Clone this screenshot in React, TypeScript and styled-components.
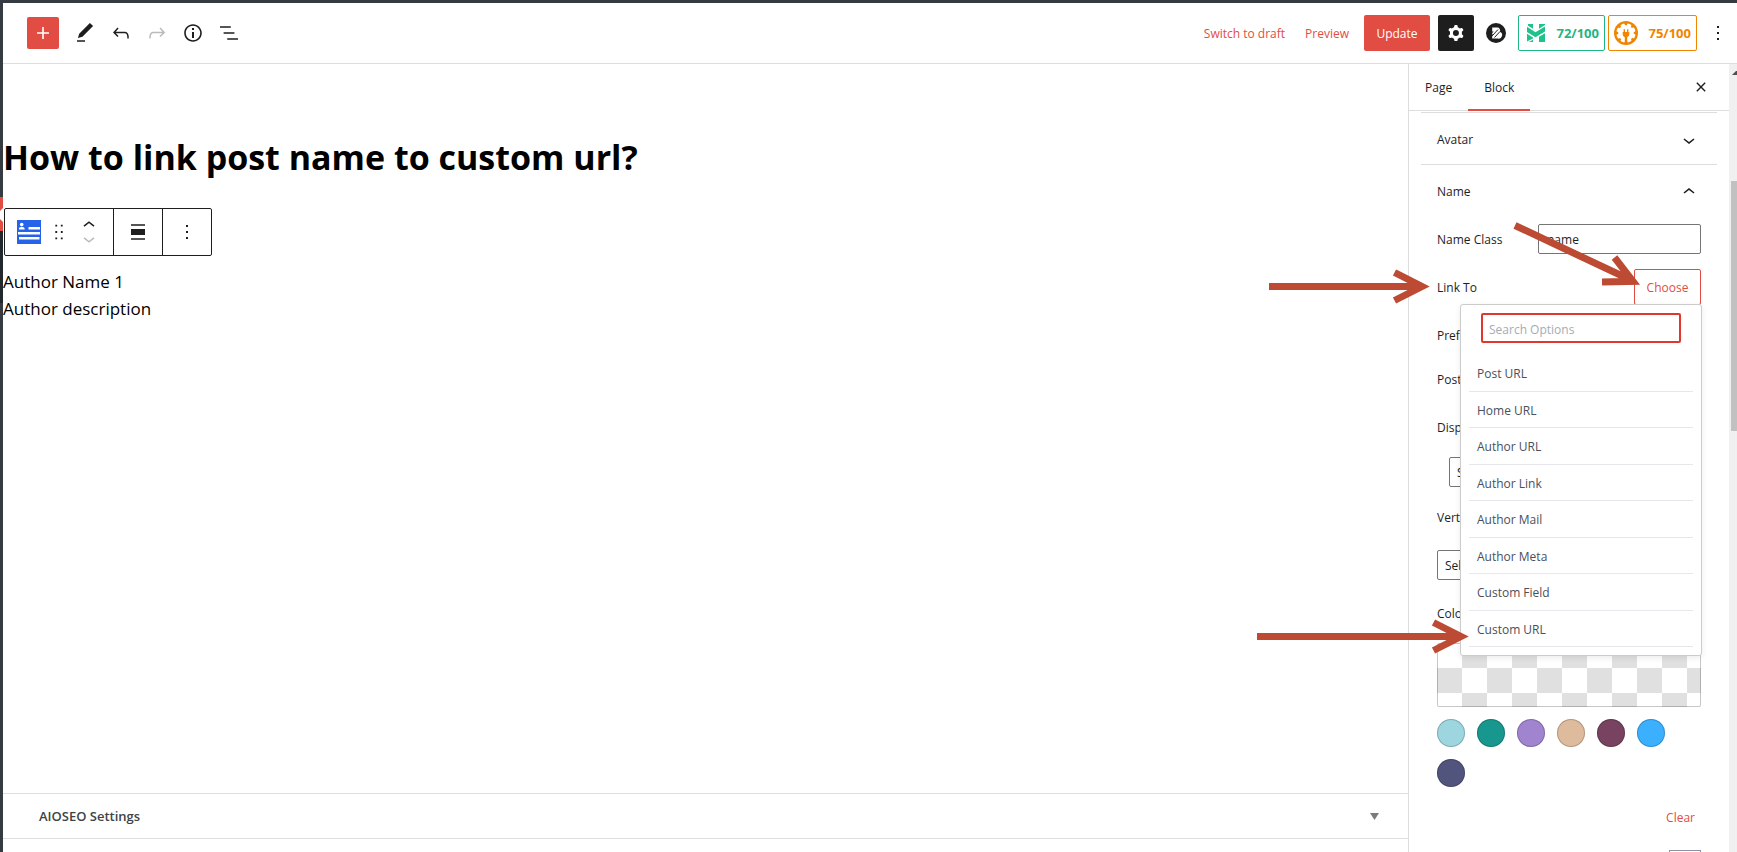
import React from 'react';
import styled, { createGlobalStyle } from 'styled-components';

const red = '#e14d43';
const ink = '#1e1e1e';
const line = '#ddd';

const GlobalStyle = createGlobalStyle`
  *, *::before, *::after { box-sizing: border-box; }
  body { margin: 0; background: #fff; }
  body, button, input, select {
    font-family: 'Open Sans', 'Noto Sans', sans-serif;
    font-size: 12px;
    line-height: 20px;
    color: ${ink};
  }
  button { border: 0; padding: 0; background: none; cursor: pointer; }
  h1, h2, p, ul { margin: 0; padding: 0; }
`;

const Shell = styled.div`
  position: relative;
  display: flex;
  height: 100vh;
  overflow: hidden;
  border-top: 3px solid #363b42;
`;

const AdminEdge = styled.div`
  flex: 0 0 3px;
  display: flex;
  flex-direction: column;
  background: #363b42;
`;

const EdgeSpacer = styled.div`
  height: 194px;
`;

const EdgeCurrent = styled.svg`
  display: block;
  width: 3px;
  height: 34px;
`;

const EdgeSubmenu = styled.div`
  height: 72px;
  background: #23282d;
`;

const Editor = styled.div`
  flex: 1;
  min-width: 0;
  display: flex;
  flex-direction: column;
`;

const Header = styled.header`
  flex: none;
  height: 61px;
  display: flex;
  align-items: center;
  justify-content: space-between;
  padding: 0 1px 0 24px;
  border-bottom: 1px solid ${line};
`;

const HeaderGroup = styled.div`
  display: flex;
  align-items: center;
`;

const InserterButton = styled.button`
  display: grid;
  place-items: center;
  width: 32px;
  height: 32px;
  margin-right: 8px;
  border-radius: 2px;
  background: ${red};
  color: #fff;
`;

const IconButton = styled.button<{ $dark?: boolean }>`
  display: grid;
  place-items: center;
  width: 36px;
  height: 36px;
  border-radius: 2px;
  color: ${(p) => (p.$dark ? '#fff' : ink)};
  background: ${(p) => (p.$dark ? ink : 'transparent')};
  &:disabled { color: #bbb; }
`;

const TextButton = styled.button`
  height: 36px;
  padding: 2px 10px 0;
  color: ${red};
`;

const UpdateButton = styled.button`
  width: 66px;
  height: 36px;
  margin: 0 8px 0 5px;
  padding-top: 2px;
  border-radius: 2px;
  background: ${red};
  color: #fff;
`;

const BrandButton = styled(IconButton)`
  margin: 0 4px;
`;

const ScoreButton = styled.button<{ $tone: string; $wide?: boolean }>`
  display: flex;
  align-items: center;
  justify-content: space-between;
  width: ${(p) => (p.$wide ? 89 : 87)}px;
  height: 36px;
  margin-right: 3px;
  padding: 0 5px 0 ${(p) => (p.$wide ? 5 : 8)}px;
  border: 1px solid ${(p) => p.$tone};
  border-radius: 2px;
  color: ${(p) => p.$tone};
  font-size: 13px;
  font-weight: 700;
`;

const Body = styled.div`
  flex: 1;
  min-height: 0;
  display: flex;
`;

const Canvas = styled.main`
  flex: 1;
  min-width: 0;
  display: flex;
  flex-direction: column;
`;

const Content = styled.div`
  flex: 1;
  padding-top: 69px;
`;

const Title = styled.h1`
  font-size: 34px;
  line-height: 48px;
  font-weight: 700;
  color: #000;
`;

const BlockToolbar = styled.div`
  display: flex;
  width: fit-content;
  height: 48px;
  margin: 27px 0 12px 1px;
  border: 1px solid ${ink};
  border-radius: 2px;
`;

const ToolGroup = styled.div`
  display: flex;
  align-items: center;
  justify-content: center;
  min-width: 49px;
  & + & { border-left: 1px solid ${ink}; }
`;

const BlockTools = styled(ToolGroup)`
  width: 108px;
  justify-content: flex-start;
  padding-left: 12px;
`;

const ToolButton = styled.button`
  display: grid;
  place-items: center;
  width: 36px;
  height: 24px;
`;

const Movers = styled.div`
  display: flex;
  flex-direction: column;
`;

const MoverButton = styled.button`
  display: flex;
  align-items: center;
  justify-content: center;
  width: 24px;
  height: 16px;
  &:disabled { color: #bbb; }
`;

const BlockText = styled.p`
  font-size: 17px;
  line-height: 27px;
  color: #000;
`;

const MetaBox = styled.button`
  flex: none;
  display: flex;
  align-items: center;
  justify-content: space-between;
  height: 45px;
  padding: 0 29px 0 36px;
  border-top: 1px solid ${line};
  font-size: 13px;
  font-weight: 600;
  color: #3c434a;
`;

const MetaFooter = styled.div`
  flex: none;
  height: 14px;
  border-top: 1px solid ${line};
`;

const Sidebar = styled.aside`
  flex: 0 0 321px;
  overflow: hidden;
  border-left: 1px solid ${line};
`;

const Tabs = styled.div`
  display: flex;
  height: 47px;
  border-bottom: 1px solid ${line};
`;

const Tab = styled.button<{ $active?: boolean }>`
  height: 47px;
  padding: 2px 16px ${(p) => (p.$active ? 0 : 2)}px;
  border-bottom: ${(p) => (p.$active ? `2px solid ${red}` : '0')};
  font-weight: 500;
`;

const CloseButton = styled(IconButton)`
  margin: 5px 10px 0 auto;
`;

const Panel = styled.section`
  margin: 0 12px;
  padding: 0 16px;
  border-top: 1px solid ${line};
  &:first-of-type { margin-top: 1px; }
`;

const PanelTitle = styled.h2`
  font-size: 12px;
  font-weight: 500;
`;

const PanelToggle = styled.button`
  display: flex;
  align-items: center;
  justify-content: space-between;
  width: 100%;
  height: 51px;
  padding-top: 2px;
  font-weight: 500;
`;

const Row = styled.div<{ $gap?: number; $tall?: boolean }>`
  position: relative;
  display: flex;
  align-items: center;
  justify-content: space-between;
  height: ${(p) => (p.$tall ? 36 : 30)}px;
  margin-top: ${(p) => p.$gap ?? 15}px;
`;

const FieldLabel = styled.label`
  padding-top: 2px;
`;

const TextInput = styled.input`
  width: 163px;
  height: 30px;
  padding: 1px 8px 0;
  border: 1px solid #757575;
  border-radius: 2px;
  background: #fff;
`;

const Select = styled.select<{ $indent?: boolean }>`
  display: block;
  width: ${(p) => (p.$indent ? 240 : 264)}px;
  height: 30px;
  margin: ${(p) => (p.$indent ? '15px 0 0 12px' : '18px 0 0')};
  padding: 1px 7px 0;
  border: 1px solid #757575;
  border-radius: 2px;
  background: #fff;
  appearance: none;
`;

const ChooseButton = styled.button`
  width: 67px;
  height: 36px;
  padding-top: 2px;
  border: 1px solid ${red};
  border-radius: 2px;
  color: ${red};
`;

const Popover = styled.div`
  position: absolute;
  z-index: 2;
  top: 35px;
  right: -1px;
  width: 242px;
  padding: 8px;
  border: 1px solid #ccc;
  border-radius: 3px;
  background: #fff;
  box-shadow: 0 2px 6px rgba(0, 0, 0, 0.08);
`;

const SearchInput = styled.input`
  display: block;
  width: 200px;
  height: 30px;
  margin: 0 0 12px 12px;
  padding: 2px 6px 0;
  border: 2px solid #e0382e;
  border-radius: 2px;
  outline: 0;
  &::placeholder { color: #a5abb7; opacity: 1; }
`;

const OptionList = styled.ul`
  display: flex;
  flex-direction: column;
  height: 292px;
  list-style: none;
`;

const Option = styled.li`
  flex: 1;
  border-bottom: 1px solid #e5e7eb;
`;

const OptionButton = styled.button`
  width: 100%;
  height: 100%;
  padding: 3px 8px 0;
  text-align: left;
  color: #4b5058;
`;

const ColorPreview = styled.button`
  display: block;
  width: 264px;
  height: 64px;
  margin: 15px 0 12px;
  border: 1px solid rgba(0, 0, 0, 0.22);
  border-radius: 2px;
  background: conic-gradient(#fff 25%, #e0e0e0 0 50%, #fff 0 75%, #e0e0e0 0) border-box 25px 0 / 50px 50px;
`;

const Swatches = styled.div`
  display: flex;
  flex-wrap: wrap;
  gap: 12px;
`;

const Swatch = styled.button<{ $color: string }>`
  width: 28px;
  height: 28px;
  border-radius: 50%;
  background: ${(p) => p.$color};
  box-shadow: inset 0 0 0 1px rgba(0, 0, 0, 0.2);
`;

const ClearRow = styled.div`
  display: flex;
  justify-content: flex-end;
  margin: 13px 0 14px;
`;

const ClearButton = styled.button`
  height: 36px;
  padding: 0 6px;
  color: ${red};
`;

const NumberInput = styled.input`
  display: block;
  width: 32px;
  height: 30px;
  margin-left: auto;
  border: 1px solid #8d92a5;
`;

const ScrollTrack = styled.div`
  flex: 0 0 8px;
  padding-left: 2px;
  overflow: hidden;
  background: #f0f0f0;
`;

const ScrollArrow = styled.svg`
  display: block;
  width: 6px;
  height: 17px;
  margin-bottom: 100px;
`;

const ScrollThumb = styled.div`
  height: 250px;
  background: #c1c1c1;
`;

const Annotations = styled.svg`
  position: absolute;
  z-index: 3;
  top: -3px;
  right: 0;
  pointer-events: none;
`;

const icons = {
  edit: 'M20.1 5.1L16.9 2 6.2 12.7l-1.3 4.4 4.5-1.3L20.1 5.1zM4 20.8h8v-1.5H4v1.5z',
  undo: 'M18.3 11.7c-.6-.6-1.4-.9-2.3-.9H6.7l2.9-3.3-1.1-1-4.5 5L8.5 16l1-1-2.7-2.7H16c.5 0 .9.2 1.3.5 1 1 1 3.4 1 4.5v.3h1.5v-.2c0-1.5 0-4.3-1.5-5.7z',
  redo: 'M15.6 6.5l-1.1 1 2.9 3.3H8c-.9 0-1.7.3-2.3.9-1.4 1.5-1.4 4.2-1.4 5.6v.2h1.5v-.3c0-1.1 0-3.5 1-4.5.3-.3.7-.5 1.3-.5h9.2L14.5 15l1.1 1.1 4.6-4.6-4.6-5z',
  info: 'M12 3.2c-4.8 0-8.8 3.9-8.8 8.8 0 4.8 3.9 8.8 8.8 8.8 4.8 0 8.8-3.9 8.8-8.8 0-4.8-4-8.8-8.8-8.8zm0 16c-4 0-7.2-3.3-7.2-7.2C4.8 8 8 4.8 12 4.8s7.2 3.3 7.2 7.2c0 4-3.2 7.2-7.2 7.2zM11 17h2v-6h-2v6zm0-8h2V7h-2v2z',
  list: 'M13.8 5.2H3v1.5h10.8V5.2zm-3.6 12v1.5H21v-1.5H10.2zm7.2-6H6.6v1.5h10.8v-1.5z',
  plus: 'M18 11.2h-5.2V6h-1.6v5.2H6v1.6h5.2V18h1.6v-5.2H18z',
  cog: 'M10.289 4.836A1 1 0 0111.275 4h1.306a1 1 0 01.987.836l.244 1.466c.787.26 1.503.679 2.108 1.218l1.393-.522a1 1 0 011.216.437l.653 1.13a1 1 0 01-.23 1.273l-1.148.944a6.025 6.025 0 010 2.435l1.149.946a1 1 0 01.23 1.272l-.653 1.13a1 1 0 01-1.216.437l-1.394-.522c-.605.54-1.32.958-2.108 1.218l-.244 1.466a1 1 0 01-.987.836h-1.306a1 1 0 01-.986-.836l-.244-1.466a5.995 5.995 0 01-2.108-1.218l-1.394.522a1 1 0 01-1.217-.436l-.653-1.131a1 1 0 01.23-1.272l1.149-.946a6.026 6.026 0 010-2.435l-1.148-.944a1 1 0 01-.23-1.272l.653-1.131a1 1 0 011.217-.437l1.393.522a5.994 5.994 0 012.108-1.218l.244-1.466zM14.929 12a3 3 0 11-6 0 3 3 0 016 0z',
  more: 'M13 19h-2v-2h2v2zm0-6h-2v-2h2v2zm0-6h-2V5h2v2z',
  close: 'M12 10.3L5.7 3.7L4 5.4L10.3 12L4 18.6L5.7 20.3L12 13.7L18.3 20.3L20 18.6L13.7 12L20 5.4L18.3 3.7z',
  down: 'M17.5 11.6L12 16l-5.5-4.4.9-1.2L12 14l4.5-3.6 1 1.2z',
  up: 'M6.5 12.4L12 8l5.5 4.4-.9 1.2L12 10l-4.5 3.6-1-1.2z',
  drag: 'M8 6h2V4H8v2zm0 7h2v-2H8v2zm0 7h2v-2H8v2zm6-16v2h2V4h-2zm0 9h2v-2h-2v2zm0 7h2v-2h-2v2z',
  align: 'M5 15h14V9H5v6zm0 4.8h14v-1.5H5v1.5zM5 4.2v1.5h14V4.2H5z',
};

const Icon = ({ name, size = 24 }: { name: keyof typeof icons; size?: number }) => (
  <svg width={size} height={size} viewBox="0 0 24 24" fill="currentColor" fillRule="evenodd" aria-hidden="true">
    <path d={icons[name]} />
  </svg>
);

const BlocksyLogo = () => (
  <svg width="20" height="20" viewBox="0 0 20 20" aria-hidden="true">
    <circle cx="10" cy="10" r="10" fill={ink} />
    <path d="M6.2 8.5V4.5h5a2.9 2.9 0 0 1 2.6 4.3 3.5 3.5 0 0 1-2 6.7H6.2v-2.2l1.5-1.7H6.2v-1.500l1.5-1.600z" fill="#fff" />
    <path d="M6.5 12.5L12 6.5M8.5 14.5L14 8.5" stroke={ink} strokeWidth="1" />
  </svg>
);

const HeadlineLogo = () => (
  <svg width="18" height="18" viewBox="0 0 18 18" fill="#1fc28b" aria-hidden="true">
    <path d="M1 0H6V4.800L1 1.800zM0 2.800L8.500 8.200L18 2.400V7.400L8.500 13.200L0 8zM12 0h6v1L12 4.700zM0 9.800L6 13.400v1L0 17.400zM6 15.800V18H1.800zM12 12.800L18 9.200V18h-6z" />
  </svg>
);

const SeoLogo = () => (
  <svg width="24" height="24" viewBox="0 0 24 24" aria-hidden="true">
    <circle cx="12" cy="12" r="12" fill="#f18500" />
    <g fill="#fff">
      <circle cx="12" cy="12" r="7.800" />
      {[22, 67, 112, 157, 202, 247, 292, 337].map((angle) => (
        <rect key={angle} x="9.800" y="2.400" width="4.400" height="5" rx="1" transform={`rotate(${angle} 12 12)`} />
      ))}
    </g>
    <path d="M8.700 11h6.600v2.300a3.200 3.200 0 0 1-2.100 3V21h-2.400v-4.700a3.200 3.200 0 0 1-2.100-3zM9.600 8.300h1.400v3H9.600zM13 8.300h1.400v3H13z" fill="#f18500" />
  </svg>
);

const AuthorBlockIcon = () => (
  <svg width="24" height="24" viewBox="0 0 24 24" aria-hidden="true">
    <path fill="#2563eb" d="M0 0h24v24H0z" />
    <g fill="#fff">
      <circle cx="4.700" cy="4.600" r="1.800" />
      <path d="M2 9.600V8.200Q2 7 4.700 7T7.600 8.200v1.400zM11.500 7H23v2.600H11.500zM1 12h22v2.400H1zM2 17h20.500v2.600H2z" />
    </g>
  </svg>
);

const MoverIcon = ({ d }: { d: string }) => (
  <svg width="12" height="6" viewBox="0 0 12 6" fill="none" stroke="currentColor" strokeWidth="1.500" aria-hidden="true">
    <path d={d} />
  </svg>
);

const options = ['Post URL', 'Home URL', 'Author URL', 'Author Link', 'Author Mail', 'Author Meta', 'Custom Field', 'Custom URL'];
const palette = ['#9dd6df', '#18978f', '#a084cf', '#dfbb9d', '#774360', '#3ab0ff', '#51557e'];

export default function App() {
  return (
    <>
      <GlobalStyle />
      <Shell>
        <AdminEdge>
          <EdgeSpacer />
          <EdgeCurrent viewBox="0 0 3 34" aria-hidden="true">
            <path d="M0 0h3v34H0z" fill={red} />
            <path d="M3 11v14L0 22v-8z" fill="#fff" />
          </EdgeCurrent>
          <EdgeSubmenu />
        </AdminEdge>
        <Editor>
          <Header>
            <HeaderGroup>
              <InserterButton aria-label="Add block"><Icon name="plus" /></InserterButton>
              <IconButton aria-label="Tools"><Icon name="edit" /></IconButton>
              <IconButton aria-label="Undo"><Icon name="undo" /></IconButton>
              <IconButton aria-label="Redo" disabled><Icon name="redo" /></IconButton>
              <IconButton aria-label="Details"><Icon name="info" /></IconButton>
              <IconButton aria-label="List view"><Icon name="list" /></IconButton>
            </HeaderGroup>
            <HeaderGroup>
              <TextButton>Switch to draft</TextButton>
              <TextButton>Preview</TextButton>
              <UpdateButton>Update</UpdateButton>
              <IconButton $dark aria-label="Settings"><Icon name="cog" /></IconButton>
              <BrandButton aria-label="Page settings"><BlocksyLogo /></BrandButton>
              <ScoreButton $tone="#1fb584"><HeadlineLogo />72/100</ScoreButton>
              <ScoreButton $tone="#f18500" $wide><SeoLogo />75/100</ScoreButton>
              <IconButton aria-label="Options"><Icon name="more" /></IconButton>
            </HeaderGroup>
          </Header>
          <Body>
            <Canvas>
              <Content>
                <Title>How to link post name to custom url?</Title>
                <BlockToolbar role="toolbar" aria-label="Block tools">
                  <BlockTools>
                    <AuthorBlockIcon />
                    <ToolButton aria-label="Drag"><Icon name="drag" size={22} /></ToolButton>
                    <Movers>
                      <MoverButton aria-label="Move up"><MoverIcon d="M1 5.200L6 1.200L11 5.200" /></MoverButton>
                      <MoverButton aria-label="Move down" disabled><MoverIcon d="M1 0.800L6 4.800L11 0.800" /></MoverButton>
                    </Movers>
                  </BlockTools>
                  <ToolGroup><ToolButton aria-label="Align"><Icon name="align" /></ToolButton></ToolGroup>
                  <ToolGroup><ToolButton aria-label="More"><Icon name="more" /></ToolButton></ToolGroup>
                </BlockToolbar>
                <BlockText>Author Name 1</BlockText>
                <BlockText>Author description</BlockText>
              </Content>
              <MetaBox>
                AIOSEO Settings
                <svg width="9" height="7" viewBox="0 0 9 7" aria-hidden="true"><path d="M0 0h9L4.500 7z" fill="#787c82" /></svg>
              </MetaBox>
              <MetaFooter />
            </Canvas>
            <Sidebar>
              <Tabs>
                <Tab>Page</Tab>
                <Tab $active>Block</Tab>
                <CloseButton aria-label="Close settings"><Icon name="close" size={14} /></CloseButton>
              </Tabs>
              <Panel>
                <PanelTitle><PanelToggle>Avatar<Icon name="down" /></PanelToggle></PanelTitle>
              </Panel>
              <Panel>
                <PanelTitle><PanelToggle>Name<Icon name="up" /></PanelToggle></PanelTitle>
                <Row $gap={8}>
                  <FieldLabel htmlFor="name-class">Name Class</FieldLabel>
                  <TextInput id="name-class" defaultValue="name" />
                </Row>
                <Row $tall>
                  <FieldLabel htmlFor="link-to">Link To</FieldLabel>
                  <ChooseButton id="link-to" aria-expanded="true">Choose</ChooseButton>
                  <Popover>
                    <SearchInput placeholder="Search Options" aria-label="Search Options" />
                    <OptionList>
                      {options.map((option) => (
                        <Option key={option}><OptionButton>{option}</OptionButton></Option>
                      ))}
                    </OptionList>
                  </Popover>
                </Row>
                <Row><FieldLabel htmlFor="prefix">Prefix</FieldLabel><TextInput id="prefix" /></Row>
                <Row $gap={14}><FieldLabel htmlFor="postfix">Postfix</FieldLabel><TextInput id="postfix" /></Row>
                <Row $gap={18}><FieldLabel htmlFor="display">Display</FieldLabel></Row>
                <Select id="display" $indent><option>Select</option></Select>
                <Row><FieldLabel htmlFor="vertical">Vertical</FieldLabel></Row>
                <Select id="vertical"><option>Select</option></Select>
                <Row $gap={18}><FieldLabel htmlFor="color">Color</FieldLabel></Row>
                <ColorPreview id="color" aria-label="Custom color picker" />
                <Swatches>
                  {palette.map((color) => <Swatch key={color} $color={color} aria-label={`Color ${color}`} />)}
                </Swatches>
                <ClearRow><ClearButton>Clear</ClearButton></ClearRow>
                <NumberInput aria-label="Font size" />
              </Panel>
            </Sidebar>
            <ScrollTrack>
              <ScrollArrow viewBox="0 0 6 17" aria-hidden="true"><path d="M1 11l4-4h1v4z" fill="#505050" /></ScrollArrow>
              <ScrollThumb />
            </ScrollTrack>
          </Body>
        </Editor>
        <Annotations width="481" height="720" viewBox="1256 0 481 720" fill="none" stroke="#bd4a32" strokeWidth="7" aria-hidden="true">
          <path d="M1269 286.500H1422M1394.500 272.500L1422 286.500L1394.500 300.500" />
          <path d="M1515 225.500L1633 281M1614.500 257.500L1633 281.300L1602 282" />
          <path d="M1257 636.500H1461M1433.500 622.500L1461 636.500L1433.500 650.500" />
        </Annotations>
      </Shell>
    </>
  );
}
